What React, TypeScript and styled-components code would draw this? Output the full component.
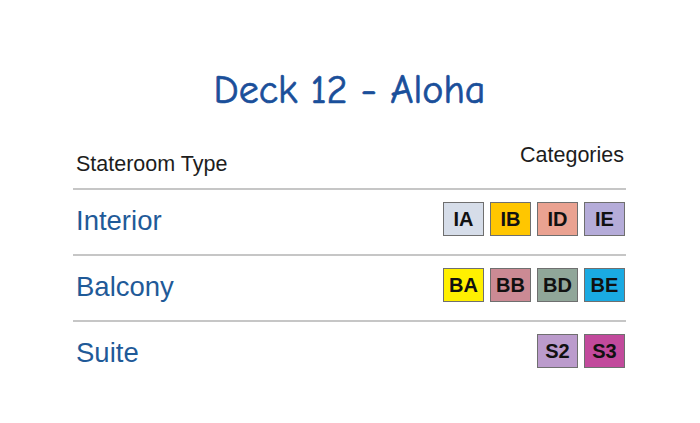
import React from 'react';
import styled, { createGlobalStyle } from 'styled-components';

const GlobalStyle = createGlobalStyle`
    html, body {
        margin: 0;
        padding: 0;
        background: #ffffff;
    }
    body {
        font-family: "Liberation Sans", Arial, sans-serif;
    }
`;

const Page = styled.div`
    width: 700px;
    height: 423px;
    display: flex;
    flex-direction: column;
    align-items: flex-start;
    padding: 64px 0 0 73px;
    box-sizing: border-box;
`;

const Title = styled.h1`
    width: 553px;
    margin: 0 0 28px;
    text-align: center;
    font-family: "Comic Sans MS", "Comic Neue", "DejaVu Sans", sans-serif;
    font-weight: normal;
    font-size: 40px;
    line-height: 52px;
    color: #1a4f9a;
    -webkit-text-stroke: 0.7px #1a4f9a;
`;

const Table = styled.div`
    width: 553px;
    display: flex;
    flex-direction: column;
`;

const HeaderRow = styled.div`
    display: flex;
    justify-content: space-between;
    align-items: flex-end;
    padding: 0 2px 12px 3px;
    border-bottom: 2px solid #c6c6c6;
    color: #1d1d1d;
    font-size: 21.5px;
`;

const HeaderCell = styled.span<{ $raise?: number }>`
    line-height: 23px;
    padding-bottom: ${(p) => p.$raise ?? 0}px;
`;

const Row = styled.div<{ $last?: boolean }>`
    display: flex;
    justify-content: space-between;
    align-items: center;
    padding: 12px 1px 18px 3px;
    border-bottom: ${(p) => (p.$last ? 'none' : '2px solid #c6c6c6')};
`;

const TypeName = styled.span`
    padding-top: 3px;
    font-size: 27.5px;
    line-height: 28px;
    color: #1f5a98;
`;

const Chips = styled.div`
    display: flex;
    gap: 6px;
`;

const Chip = styled.span<{ $bg: string }>`
    width: 41px;
    height: 34px;
    box-sizing: border-box;
    display: flex;
    align-items: center;
    justify-content: center;
    background: ${(p) => p.$bg};
    border: 1px solid #6f6f6f;
    font-size: 20px;
    font-weight: bold;
    color: #111111;
`;

const rows = [
    {
        name: 'Interior',
        chips: [
            { code: 'IA', color: '#d6dde9' },
            { code: 'IB', color: '#ffc600' },
            { code: 'ID', color: '#eaa291' },
            { code: 'IE', color: '#b5acd9' },
        ],
    },
    {
        name: 'Balcony',
        chips: [
            { code: 'BA', color: '#fff000' },
            { code: 'BB', color: '#cb8a94' },
            { code: 'BD', color: '#90a699' },
            { code: 'BE', color: '#1aaae2' },
        ],
    },
    {
        name: 'Suite',
        chips: [
            { code: 'S2', color: '#bb9bcc' },
            { code: 'S3', color: '#c24a9c' },
        ],
    },
];

const App: React.FC = () => (
    <Page>
        <GlobalStyle />
        <Title>Deck 12 - Aloha</Title>
        <Table>
            <HeaderRow>
                <HeaderCell>Stateroom Type</HeaderCell>
                <HeaderCell $raise={9}>Categories</HeaderCell>
            </HeaderRow>
            {rows.map((row, i) => (
                <Row key={row.name} $last={i === rows.length - 1}>
                    <TypeName>{row.name}</TypeName>
                    <Chips>
                        {row.chips.map((c) => (
                            <Chip key={c.code} $bg={c.color}>{c.code}</Chip>
                        ))}
                    </Chips>
                </Row>
            ))}
        </Table>
    </Page>
);

export default App;
